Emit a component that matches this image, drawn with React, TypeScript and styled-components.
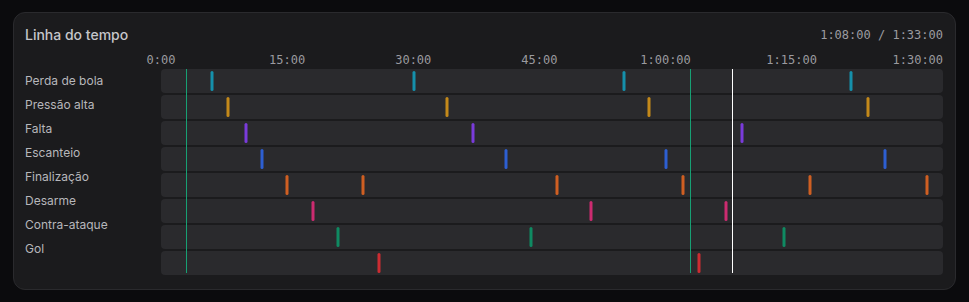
import React from 'react';
import styled, { createGlobalStyle } from 'styled-components';

const TOTAL = 5580; // 1:33:00 in seconds
const CURRENT = 4080; // 1:08:00
const RANGE = [180, 3780];

const pct = (s: number) => `${(s / TOTAL) * 100}%`;

const fmt = (s: number) => {
  const h = Math.floor(s / 3600);
  const m = Math.floor((s % 3600) / 60);
  const sec = s % 60;
  const mm = String(m).padStart(2, '0');
  const ss = String(sec).padStart(2, '0');
  return h > 0 ? `${h}:${mm}:${ss}` : `${m}:${ss}`;
};

type EventRow = { label: string; color: string; times: number[] };

const rows: EventRow[] = [
  { label: 'Perda de bola', color: '#1590ab', times: [364, 1803, 3306, 4926] },
  { label: 'Pressão alta', color: '#c4891a', times: [480, 2043, 3484, 5047] },
  { label: 'Falta', color: '#7a3bdb', times: [604, 2228, 4148] },
  { label: 'Escanteio', color: '#2d5fd2', times: [721, 2464, 3606, 5168] },
  { label: 'Finalização', color: '#cf5f22', times: [901, 1444, 2828, 3727, 4629, 5468] },
  { label: 'Desarme', color: '#cc2b70', times: [1087, 3070, 4029] },
  { label: 'Contra-ataque', color: '#0f8a62', times: [1261, 2642, 4448] },
  { label: 'Gol', color: '#cc2c32', times: [1558, 3839] },
];

const ticks = [0, 900, 1800, 2700, 3600, 4500, 5400];

const GlobalStyle = createGlobalStyle`
  html, body {
    margin: 0;
    background: #0b0b0d;
  }
  body {
    padding: 12px 13px;
    font-family: Inter, "Noto Sans", sans-serif;
  }
`;

const Card = styled.section`
  background: #1b1b1d;
  border: 1px solid #2a2a2d;
  border-radius: 12px;
  padding: 12px 12px 14px 11px;
`;

const Header = styled.header`
  display: flex;
  align-items: center;
  justify-content: space-between;
  height: 20px;
`;

const Title = styled.h2`
  margin: 0;
  font-size: 14px;
  font-weight: 500;
  color: #c6c6ca;
  line-height: 20px;
`;

const Clock = styled.span`
  font-family: "DejaVu Sans Mono", monospace;
  font-size: 12px;
  color: #9c9ca1;
`;

const Body = styled.div`
  display: flex;
  margin-top: 7px;
`;

const LabelCol = styled.div`
  width: 136px;
  flex-shrink: 0;
  padding-top: 17px;
  display: flex;
  flex-direction: column;
`;

const Label = styled.div`
  height: 24px;
  line-height: 24px;
  font-size: 12px;
  color: #b7b7bb;
`;

const TrackCol = styled.div`
  flex: 1;
  display: flex;
  flex-direction: column;
`;

const Axis = styled.div`
  position: relative;
  height: 17px;
`;

const Tick = styled.span`
  position: absolute;
  top: 0;
  transform: translateX(-50%);
  font-family: "DejaVu Sans Mono", monospace;
  font-size: 12px;
  line-height: 16px;
  color: #9a9a9f;
  white-space: nowrap;
`;

const Tracks = styled.div`
  position: relative;
  display: flex;
  flex-direction: column;
  gap: 2px;
`;

const Track = styled.div`
  position: relative;
  height: 24px;
  background: #2a2a2d;
  border-radius: 4px;
`;

const Marker = styled.span<{ $color: string }>`
  position: absolute;
  top: 2px;
  bottom: 2px;
  width: 3px;
  transform: translateX(-50%);
  border-radius: 2px;
  background: ${(p) => p.$color};
`;

// vertical cursor lines, snapped to whole pixels so they stay crisp
const Line = styled.span<{ $at: string; $color: string }>`
  position: absolute;
  top: 0;
  bottom: 2px;
  width: 0;
  left: ${(p) => p.$at};
  left: round(down, ${(p) => p.$at}, 1px);
  border-left: 1px solid ${(p) => p.$color};
  pointer-events: none;
`;

export default function App() {
  return (
    <>
      <GlobalStyle />
      <Card>
        <Header>
          <Title>Linha do tempo</Title>
          <Clock>
            {fmt(CURRENT)} / {fmt(TOTAL)}
          </Clock>
        </Header>
        <Body>
          <LabelCol>
            {rows.map((r) => (
              <Label key={r.label}>{r.label}</Label>
            ))}
          </LabelCol>
          <TrackCol>
            <Axis>
              {ticks.map((t) => (
                <Tick key={t} style={{ left: pct(t) }}>
                  {fmt(t)}
                </Tick>
              ))}
            </Axis>
            <Tracks>
              {rows.map((r) => (
                <Track key={r.label}>
                  {r.times.map((t) => (
                    <Marker key={t} $color={r.color} style={{ left: pct(t) }} />
                  ))}
                </Track>
              ))}
              <Line $color="#17a074" $at={pct(RANGE[0])} />
              <Line $color="#17a074" $at={pct(RANGE[1])} />
              <Line $color="#ffffff" $at={pct(CURRENT)} />
            </Tracks>
          </TrackCol>
        </Body>
      </Card>
    </>
  );
}
